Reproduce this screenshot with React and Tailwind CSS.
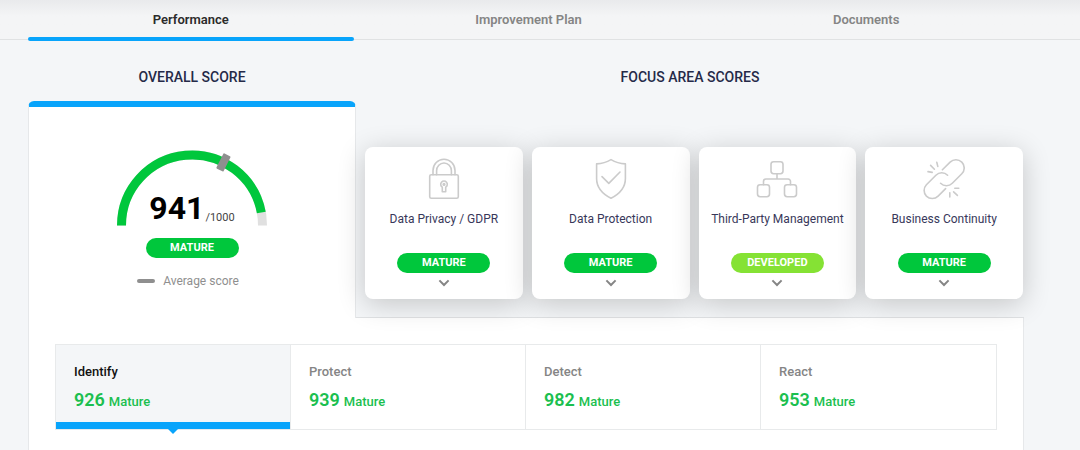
import { useState } from 'react';

const TABS = ['Performance', 'Improvement Plan', 'Documents'];

const FUNCTIONS = [
  { name: 'Identify', score: 926, level: 'Mature' },
  { name: 'Protect', score: 939, level: 'Mature' },
  { name: 'Detect', score: 982, level: 'Mature' },
  { name: 'React', score: 953, level: 'Mature' },
];

function IconFrame({ children }) {
  return (
    <svg
      viewBox="0 0 42 42"
      className="h-[42px] w-[42px]"
      fill="none"
      stroke="#cbcbcb"
      strokeWidth="1.6"
      strokeLinecap="round"
      strokeLinejoin="round"
      aria-hidden="true"
    >
      {children}
    </svg>
  );
}

function LockIcon() {
  return (
    <IconFrame>
      <rect x="6.7" y="16.7" width="28.6" height="23.6" rx="1.6" />
      <path d="M10 16.7V12.5a11 11.3 0 0 1 22 0V16.7" />
      <path d="M13.6 16.7V12.8a7.4 7.8 0 0 1 14.8 0V16.7" />
      <path d="M19.3 29.2a3.3 3.3 0 1 1 3.4 0V33.8h-3.4z" />
      <circle cx="21" cy="26.4" r="0.8" />
    </IconFrame>
  );
}

function ShieldIcon() {
  return (
    <IconFrame>
      <path d="M21 1.6C16.6 4.2 11.6 5.6 6.6 5.9V20.5C6.6 30 12.6 36 21 40.3C29.4 36 35.4 30 35.4 20.5V5.9C30.4 5.6 25.4 4.2 21 1.6Z" />
      <path d="M12 18.6L18.8 25.4L30 14" />
    </IconFrame>
  );
}

function HierarchyIcon() {
  return (
    <IconFrame>
      <rect x="15" y="3.7" width="12" height="12" rx="2.6" />
      <rect x="1.5" y="26.7" width="12" height="12" rx="2.6" />
      <rect x="28.5" y="26.7" width="12" height="12" rx="2.6" />
      <path d="M21 15.7V21M7.5 26.7V23.4a2.4 2.4 0 0 1 2.4-2.4h22.2a2.4 2.4 0 0 1 2.4 2.4v3.3" />
    </IconFrame>
  );
}

function ChainIcon() {
  return (
    <IconFrame>
      <path d="M19.4 11.8L27.1 4.1a8.3 8.3 0 0 1 11.7 0a8.3 8.3 0 0 1 0 11.7L29.3 25.3a8.3 8.3 0 0 1-11.7 0" />
      <path d="M24.6 17.2a8.3 8.3 0 0 0-11.7 0L3.4 26.7a8.3 8.3 0 0 0 0 11.4a8.3 8.3 0 0 0 11.7 0L22.6 30.6" />
      <path d="M13.8 4.4l1 4M7.6 7.4l3.8 3.8M5 13.6l4.2 0.8" />
      <path d="M26.8 34.8v4.2M30.6 33.8l3.8 3.6M31.8 30.2h4" />
    </IconFrame>
  );
}

const AREAS = [
  { name: 'Data Privacy / GDPR', level: 'MATURE', Icon: LockIcon },
  { name: 'Data Protection', level: 'MATURE', Icon: ShieldIcon },
  { name: 'Third-Party Management', level: 'DEVELOPED', Icon: HierarchyIcon },
  { name: 'Business Continuity', level: 'MATURE', Icon: ChainIcon },
];

function Badge({ level }) {
  const color = level === 'DEVELOPED' ? 'bg-[#85e234]' : 'bg-[#00c73c]';
  return (
    <span
      className={`flex h-5 w-[93px] items-center justify-center rounded-full text-[11px] leading-5 font-bold text-white ${color}`}
    >
      {level}
    </span>
  );
}

function Gauge() {
  return (
    <svg viewBox="0 0 150 76" className="col-start-1 row-start-1 h-[76px] w-[150px]" role="img" aria-label="941 out of 1000">
      <path d="M4.5 75.5A70.5 70.5 0 0 1 145.5 75.5" fill="none" stroke="#e0e0e0" strokeWidth="9" />
      <path d="M4.5 75.5A70.5 70.5 0 0 1 144.3 62.5" fill="none" stroke="#00c73c" strokeWidth="9" />
      <rect x="-4" y="-79" width="8" height="17" rx="1" fill="#8f8f8f" transform="translate(75 75.5) rotate(26.5)" />
    </svg>
  );
}

function OverallScore() {
  return (
    <section className="flex flex-col items-center rounded-t-md border-x border-t-6 border-x-[#e6e8ea] border-t-[#08a4fb] bg-white pt-[43px]">
      <div className="grid justify-items-center">
        <Gauge />
        <p className="col-start-1 row-start-1 flex items-end self-end pb-[2px]">
          <span className="text-[32px] leading-8 font-bold text-black">941</span>
          <span className="pl-px text-[11px] leading-3 text-[#444]">/1000</span>
        </p>
      </div>
      <div className="pt-3">
        <Badge level="MATURE" />
      </div>
      <p className="flex items-center gap-2 pt-[15px] pr-2 text-xs leading-4 text-[#8f8f8f]">
        <span className="h-1 w-[18px] rounded-full bg-[#8f8f8f]" />
        Average score
      </p>
    </section>
  );
}

function AreaCard({ name, level, Icon }) {
  return (
    <article className="flex flex-col items-center rounded-lg bg-white pt-[11px] pb-[6px] shadow-[0_5px_28px_rgba(0,0,0,0.2)]">
      <Icon />
      <h3 className="pt-[11px] text-xs leading-4 whitespace-nowrap text-[#38385a]">{name}</h3>
      <div className="pt-[26px]">
        <Badge level={level} />
      </div>
      <button type="button" aria-label={`Show ${name} details`} className="flex h-5 w-6 items-center justify-center">
        <svg viewBox="0 0 12 8" className="h-2 w-3" fill="none" stroke="#858585" strokeWidth="2" aria-hidden="true">
          <path d="M1.4 1.4L6 6L10.6 1.4" />
        </svg>
      </button>
    </article>
  );
}

export default function App() {
  const [tab, setTab] = useState(0);
  const [selected, setSelected] = useState(0);

  return (
    <div className="flex min-h-screen flex-col bg-[#f4f6f8] font-['Roboto',sans-serif]">
      <nav className="border-b border-[#e0e2e3] bg-linear-to-b from-[#e9eaec] to-[#f4f5f6] to-[16px] pr-[51px] pl-7">
        <div className="-mb-[2px] grid grid-cols-3 gap-3">
          {TABS.map((label, i) => (
            <button
              key={label}
              type="button"
              onClick={() => setTab(i)}
              className="flex flex-col items-center text-[13px] leading-4 font-semibold"
            >
              <span className={`pt-3 pb-[9px] ${i === tab ? 'text-[#2b2b2b]' : 'text-[#858585]'}`}>{label}</span>
              <span className={`h-1 w-full rounded-full ${i === tab ? 'bg-[#08a4fb]' : 'bg-transparent'}`} />
            </button>
          ))}
        </div>
      </nav>

      <main className="flex grow flex-col pr-14 pl-7">
        <div className="grid grid-cols-[328fr_668fr] pt-[27px] pb-[14px] text-center text-sm leading-5 font-medium text-[#252a48]">
          <h2>OVERALL SCORE</h2>
          <h2>FOCUS AREA SCORES</h2>
        </div>

        <div className="grid grid-cols-[328fr_668fr]">
          <OverallScore />
          <section className="relative z-10 border-b border-[#e0e2e4] pt-[46px] pr-px pb-[18px] pl-[9px]">
            <div className="grid grid-cols-4 gap-[9px]">
              {AREAS.map((area) => (
                <AreaCard key={area.name} {...area} />
              ))}
            </div>
          </section>
        </div>

        <section className="grow border-x border-[#e6e8ea] bg-white px-[26px] pt-[26px] pb-5">
          <div className="grid grid-cols-4 border border-[#e8eaeb]">
            {FUNCTIONS.map((item, i) => {
              const active = i === selected;
              return (
                <button
                  key={item.name}
                  type="button"
                  onClick={() => setSelected(i)}
                  className={`relative flex flex-col border-r border-[#e8eaeb] text-left last:border-r-0 ${active ? 'bg-[#f4f6f8]' : 'bg-white'}`}
                >
                  <span className={`px-[18px] pt-[19px] text-[13px] leading-4 font-medium ${active ? 'text-[#111]' : 'text-[#858585]'}`}>
                    {item.name}
                  </span>
                  <span className="flex items-baseline gap-1 px-[18px] py-2 leading-6 text-[#1bbf4f]">
                    <span className="text-lg leading-6 font-semibold">{item.score}</span>
                    <span className="text-[13px] font-medium">{item.level}</span>
                  </span>
                  <span className={`h-[7px] w-full ${active ? 'bg-[#08a4fb]' : 'bg-transparent'}`} />
                  {active && (
                    <svg viewBox="0 0 10 5" className="absolute top-full left-1/2 h-[5px] w-[10px] -translate-x-1/2" aria-hidden="true">
                      <path d="M0 0H10L5 5Z" fill="#08a4fb" />
                    </svg>
                  )}
                </button>
              );
            })}
          </div>
        </section>
      </main>
    </div>
  );
}
